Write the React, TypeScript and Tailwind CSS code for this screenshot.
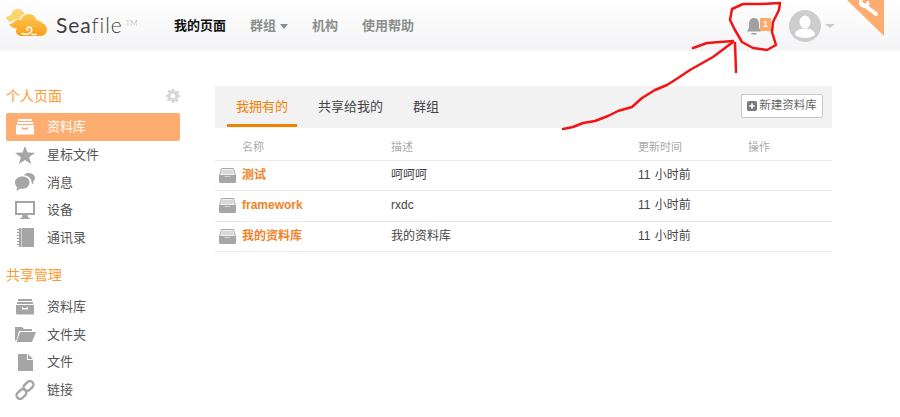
import React from 'react';

const cjk = "font-['Liberation_Sans','Noto_Sans_CJK_SC',sans-serif]";

type IconProps = { className?: string };

const ArchiveIcon = ({ className }: IconProps) => (
  <svg viewBox="0 0 18 16" className={className} fill="currentColor">
    <rect x="2" y="0" width="14" height="2" />
    <rect x="1" y="3" width="16" height="2" />
    <path d="M0 6h18v8.500a1 1 0 0 1-1 1H1a1 1 0 0 1-1-1V6zm6 2v2.500h6V8h-1v1H7V8H6z" fillRule="evenodd" />
  </svg>
);

const StarIcon = ({ className }: IconProps) => (
  <svg viewBox="0 0 20 18" className={className} fill="currentColor">
    <path d="M10 0l2.500 6.500 7.500.3-5.900 4.400 2.100 6.800L10 14.100 3.800 18l2.100-6.800L0 6.800l7.500-.3z" />
  </svg>
);

const ChatIcon = ({ className }: IconProps) => (
  <svg viewBox="0 0 20 18" className={className} fill="currentColor">
    <path d="M7.500 3.500c4 0 7 2.500 7 6s-3 6.200-7 6.200c-.6 0-1.200 0-1.800-.2L1.500 18l.6-3.800C.8 13 0 11.400 0 9.500c0-3.500 3.300-6 7.500-6z" />
    <path d="M13.500 0c3.500 0 6.500 2.200 6.500 5 0 1.500-.7 2.700-1.800 3.600l.3 3-1.700-1.300c0-4.500-3-7.500-8-8.300C10 .7 11.600 0 13.500 0z" />
  </svg>
);

const MonitorIcon = ({ className }: IconProps) => (
  <svg viewBox="0 0 20 18" className={className} fill="currentColor">
    <path d="M0 0h20v14H12.500l1 3H15v1H5v-1h1.500l1-3H0V0zm2 2v10h16V2H2z" fillRule="evenodd" />
  </svg>
);

const ContactsIcon = ({ className }: IconProps) => (
  <svg viewBox="0 0 17 19" className={className} fill="currentColor">
    <path d="M2 0h15v19H2v-2H0v-1h2v-2H0v-1h2v-2H0v-1h2V8H0V7h2V5H0V4h2V2H0V1h2V0z" />
    <rect x="4" y="0" width="1" height="19" fill="#fff" opacity=".5" />
  </svg>
);

const FolderIcon = ({ className }: IconProps) => (
  <svg viewBox="0 0 21 15" className={className} fill="currentColor">
    <path d="M0 0h7l2 2h8v2H4L1.500 13 0 14V0z" />
    <path d="M5 5h16l-4 10H1.500z" />
  </svg>
);

const FileIcon = ({ className }: IconProps) => (
  <svg viewBox="0 0 15 17" className={className} fill="currentColor">
    <path d="M0 0h9v6h6v11H0V0zm10 0l5 5h-5V0z" />
  </svg>
);

const LinkIcon = ({ className }: IconProps) => (
  <svg viewBox="0 0 20 20" className={className} fill="none" stroke="currentColor" strokeWidth="2.400">
    <rect x="8" y="2.500" width="11" height="7" rx="3.500" transform="rotate(-45 13.500 6)" />
    <rect x="1" y="10.500" width="11" height="7" rx="3.500" transform="rotate(-45 6.500 14)" />
  </svg>
);

// line-drawn chest used on the table rows
const RepoIcon = ({ className }: IconProps) => (
  <svg viewBox="0 0 17 15" className={className}>
    <path d="M2.500 .5h12l2 7H.5z" fill="#f4f4f4" stroke="#a8a8a8" />
    <path d="M3 3h11M2.500 5h12" stroke="#bcbcbc" />
    <path d="M0 7h5.500v1.500h6V7H17v6.500a1.500 1.500 0 0 1-1.500 1.500h-14A1.500 1.500 0 0 1 0 13.500z" fill="#a6a6a6" />
  </svg>
);

const SeafileCloud = () => (
  <svg viewBox="0 0 42 28" className="w-[42px] h-[28px] mt-[-5px]">
    <defs>
      <linearGradient id="cloudFill" x1="0" y1="0" x2="0" y2="1">
        <stop offset="0" stopColor="#fcc950" />
        <stop offset="1" stopColor="#f99f1c" />
      </linearGradient>
    </defs>
    <path d="M0 9c1-2 3-2 5-3C6 2 9 0 12 0c3 0 5 2 6 4l1 1c-3 1-5 3-6 6-3-1-6 0-8 2C3 13 1 11 0 9z" fill="#fad56c" />
    <path d="M3 15c3 0 4-1 6-3 2-1.500 4-1.500 6-1 1-3.500 4-6 8-6s7 3 8 7c1-1 4 0 5 2 3 1 5 4 5 7s-3 6-6 6H16c-3 0-6-2-6-5 0-1 0-2 1-3-3 1-6-1-8-4z" fill="url(#cloudFill)" />
    <path d="M16 24.500c4 1.500 8 .5 9.500-2.200 1.200-2.800-1.600-5-3.700-3.900-1.800 1-.8 2.900.4 2.500M26 25.500h4" fill="none" stroke="#fff" strokeWidth="1.500" strokeLinecap="round" />
  </svg>
);

const SideItem = ({
  icon,
  label,
  active,
}: {
  icon: React.ReactNode;
  label: string;
  active?: boolean;
}) => (
  <li
    className={`flex items-center h-[27.750px] rounded-[2px] text-[13px] ${
      active ? 'bg-[#ffac71] text-white' : 'text-[#555]'
    }`}
  >
    <span className={`w-[38px] mr-[3px] flex justify-center ${active ? 'text-white' : 'text-[#a5a5a5]'}`}>
      {icon}
    </span>
    <span>{label}</span>
  </li>
);

const rows = [
  { name: '测试', desc: '呵呵呵' },
  { name: 'framework', desc: 'rxdc' },
  { name: '我的资料库', desc: '我的资料库' },
];

export default function App() {
  return (
    <div className={`${cjk} relative w-[900px] h-[417px] overflow-hidden bg-white`}>
      <header className="h-[51px] bg-gradient-to-b from-white to-[#f4f4f6] flex items-center">
        <div className="flex items-center ml-[6px] w-[168px]">
          <SeafileCloud />
          <span className="font-['Lato',sans-serif] text-[#3f3f3f] text-[21px] tracking-[0.9px] ml-[8px] mt-[-2px]">
            Sea<span className="font-light">file</span>
          </span>
          <span className="font-['Lato',sans-serif] text-[#aaa] text-[8px] font-light self-start mt-[6px] ml-[3px]">TM</span>
        </div>
        <nav className="flex items-center text-[13px] font-bold text-[#8a8f8c]">
          <span className="text-[#111] w-[76px]">我的页面</span>
          <span className="flex items-center w-[62px]">
            群组
            <span className="ml-[4px] mt-[1px] border-x-[4px] border-x-transparent border-t-[5px] border-t-[#8a8f8c]" />
          </span>
          <span className="w-[50px]">机构</span>
          <span>使用帮助</span>
        </nav>
        <div className="ml-auto mr-[65px] flex items-center">
          <div className="relative w-[24px] h-[17px] mr-[18px] mt-[2px]">
            <svg viewBox="0 0 14 17" className="absolute left-0 top-0 w-[14px] h-[17px] text-[#a0a0a0]" fill="currentColor">
              <path d="M7 0c3.500 0 5 2.500 5 6v3.500l2 4H0l2-4V6C2 2.500 3.500 0 7 0z" />
              <rect x="4.500" y="15" width="5" height="1.500" />
            </svg>
            <span className="absolute right-0 top-0 w-[11px] h-[13px] bg-[#fbaa6d] text-white text-[9px] leading-[13px] text-center font-bold">1</span>
          </div>
          <div className="w-[32px] h-[32px] rounded-full bg-[#cdcdcd] overflow-hidden flex items-center justify-center">
            <svg viewBox="0 0 32 32" className="w-[32px] h-[32px]" fill="#fff">
              <ellipse cx="16" cy="12" rx="5.500" ry="6.500" />
              <path d="M6 25c0-4 4-6.500 10-6.500s10 2.500 10 6.500c-2 1.500-6 3-10 3s-8-1.500-10-3z" />
            </svg>
          </div>
          <span className="ml-[4px] border-x-[5px] border-x-transparent border-t-[4px] border-t-[#ccc]" />
        </div>
      </header>

      <div className="flex">
        <aside className="w-[174px] ml-[6px] pt-[35px]">
          <div className="flex items-center justify-between h-[20px]">
            <h3 className="text-[14px] text-[#ff9a2e]">个人页面</h3>
            <svg viewBox="0 0 24 24" className="w-[14px] h-[14px] text-[#d8d8d8]" fill="currentColor">
              <path fillRule="evenodd" d="M10 0h4l.7 3.400 2.300 1 3-1.900 2.800 2.800-1.900 3 1 2.300L24 10v4l-3.400.7-1 2.300 1.900 3-2.800 2.800-3-1.900-2.300 1L14 24h-4l-.7-3.400-2.300-1-3 1.900-2.800-2.800 1.900-3-1-2.300L0 14v-4l3.400-.7 1-2.300-1.900-3L4.300 1.200l3 1.900 2.300-1L10 0zm2 8a4 4 0 1 0 0 8 4 4 0 0 0 0-8z" />
            </svg>
          </div>
          <ul className="mt-[7px]">
            <SideItem active label="资料库" icon={<ArchiveIcon className="w-[18px] h-[16px]" />} />
            <SideItem label="星标文件" icon={<StarIcon className="w-[20px] h-[18px]" />} />
            <SideItem label="消息" icon={<ChatIcon className="w-[20px] h-[18px]" />} />
            <SideItem label="设备" icon={<MonitorIcon className="w-[20px] h-[18px]" />} />
            <SideItem label="通讯录" icon={<ContactsIcon className="w-[17px] h-[19px]" />} />
          </ul>
          <h3 className="text-[14px] text-[#ff9a2e] mt-[13px] h-[20px] leading-[20px]">共享管理</h3>
          <ul className="mt-[8px]">
            <SideItem label="资料库" icon={<ArchiveIcon className="w-[18px] h-[16px]" />} />
            <SideItem label="文件夹" icon={<FolderIcon className="w-[21px] h-[15px]" />} />
            <SideItem label="文件" icon={<FileIcon className="w-[15px] h-[17px]" />} />
            <SideItem label="链接" icon={<LinkIcon className="w-[20px] h-[20px]" />} />
          </ul>
        </aside>

        <main className="w-[617px] ml-[35px] mt-[35px]">
          <div className="h-[42px] bg-[#f2f2f2] flex items-stretch text-[13px] text-[#444]">
            <span className="ml-[12px] mb-[1px] pt-[3px] w-[70px] flex items-center justify-center text-[#ee8204] border-b-[3px] border-[#ee8204]">我拥有的</span>
            <span className="ml-[21px] pb-[1px] flex items-center">共享给我的</span>
            <span className="ml-[30px] pb-[1px] flex items-center">群组</span>
            <button className="ml-auto mr-[9px] mt-[8px] w-[82px] h-[24px] bg-white border border-[#c8c8c8] rounded-[2px] flex items-center justify-center text-[11.500px] text-[#666]">
              <svg viewBox="0 0 11 11" className="w-[10px] h-[10px] mr-[2px]">
                <rect width="11" height="11" rx="2" fill="#7a7a7a" />
                <path d="M5.500 2.500v6M2.500 5.500h6" stroke="#fff" strokeWidth="1.800" />
              </svg>
              新建资料库
            </button>
          </div>
          <table className="w-full text-[12px] table-fixed border-collapse">
            <thead>
              <tr className="h-[32px] border-b border-[#eaeaea] text-[11px] text-[#aaa] text-left">
                <th className="w-[176px] font-normal pl-[27px] pt-[6px]">名称</th>
                <th className="w-[247px] font-normal pt-[6px]">描述</th>
                <th className="w-[110px] font-normal pt-[6px]">更新时间</th>
                <th className="font-normal pt-[6px]">操作</th>
              </tr>
            </thead>
            <tbody>
              {rows.map((row) => (
                <tr key={row.name} className="h-[30.500px] border-b border-[#eaeaea] text-[#444]">
                  <td className="p-0">
                    <div className="flex items-center pl-[4px]">
                      <RepoIcon className="w-[17px] h-[15px] mr-[6px]" />
                      <span className="font-bold text-[#f0832a] pb-[1px]">{row.name}</span>
                    </div>
                  </td>
                  <td className="pb-[1px]">{row.desc}</td>
                  <td className="pb-[1px] [word-spacing:1px]">11 小时前</td>
                  <td />
                </tr>
              ))}
            </tbody>
          </table>
        </main>
      </div>

      {/* top right corner ribbon */}
      <svg viewBox="0 0 37 36" className="absolute left-[847px] top-0 w-[37px] h-[36px]">
        <path d="M0 0h37v36z" fill="#ffac71" />
        <path d="M17 5l12 9" stroke="#fff" strokeWidth="4" strokeLinecap="round" />
        <path d="M12 0h4l-1 2 4 2 1-3 2 0c1 3 0 6-3 7-3 0-6-1-7-4z" fill="#fff" />
      </svg>

      {/* hand drawn annotation */}
      <svg className="absolute left-0 top-0 w-[900px] h-[417px] pointer-events-none" viewBox="0 0 900 417" fill="none" stroke="#f21414" strokeWidth="2.500" strokeLinejoin="round" strokeLinecap="round">
        <path d="M780 3 760 4 743 4 732 9 730 20 735 30 742 42 753 48 767 50 776 45 772 32 773 22 779 10z" />
        <path d="M563 129 573 127 583 123 595 121 608 116 618 111 632 107 642 98 655 90 667 85 678 78 690 70 713 57 733 42" />
        <path d="M693 48 707 43 733 41" />
        <path d="M735 43 736 72" />
      </svg>
    </div>
  );
}
